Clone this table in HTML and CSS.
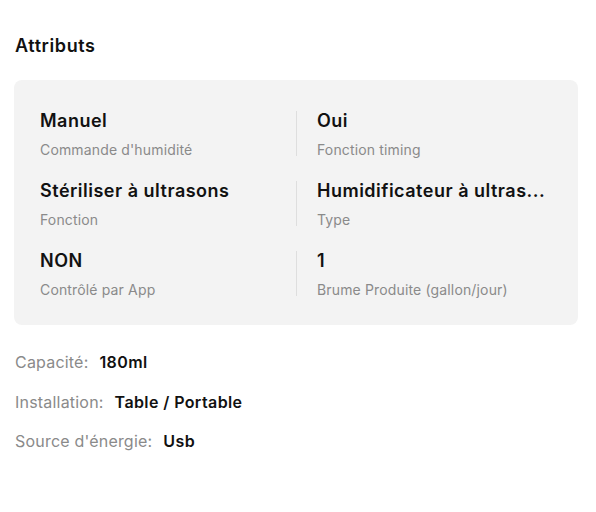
FILE: index.html
```html
<!doctype html>
<html lang="fr">
<head>
<meta charset="UTF-8">
<title>Attributs</title>
<link rel="stylesheet" href="styles.css">
</head>
<body>
	<div class="attrs">
		<h2 class="attrs-title">Attributs</h2>
		<div class="attrs-card">
			<div class="cell">
				<div class="cell-value">Manuel</div>
				<div class="cell-label">Commande d'humidité</div>
			</div>
			<div class="cell cell-right">
				<div class="cell-value">Oui</div>
				<div class="cell-label">Fonction timing</div>
			</div>
			<div class="cell">
				<div class="cell-value">Stériliser à ultrasons</div>
				<div class="cell-label">Fonction</div>
			</div>
			<div class="cell cell-right">
				<div class="cell-value" title="Humidificateur à ultrasons">Humidificateur à ultras...</div>
				<div class="cell-label">Type</div>
			</div>
			<div class="cell">
				<div class="cell-value">NON</div>
				<div class="cell-label">Contrôlé par App</div>
			</div>
			<div class="cell cell-right">
				<div class="cell-value">1</div>
				<div class="cell-label">Brume Produite (gallon/jour)</div>
			</div>
		</div>
		<ul class="attrs-list">
			<li><span class="key">Capacité:</span><span class="val">180ml</span></li>
			<li><span class="key">Installation:</span><span class="val">Table / Portable</span></li>
			<li><span class="key">Source d'énergie:</span><span class="val">Usb</span></li>
		</ul>
	</div>
</body>
</html>
```

FILE: styles.css
```css
* {margin:0;padding:0;box-sizing:border-box;}
body{font-family:Inter,"Noto Sans",sans-serif;color:#111;background:#fff;}
ul,li{list-style:none;}
.attrs{padding:34px 18px 0 14px;}
.attrs-title{font-size:18px;font-weight:600;line-height:24px;padding-left:1px;letter-spacing:0.6px;}
.attrs-card{margin-top:22px;background:#f3f3f3;border-radius:8px;padding:31px 26px 29px 26px;display:grid;grid-template-columns:1fr 1fr;row-gap:25px;}
.cell{min-width:0;height:45px;}
.cell-right{border-left:1px solid #dedede;padding-left:20px;}
.cell-value{font-size:18px;font-weight:600;line-height:20px;letter-spacing:0.5px;white-space:nowrap;}
.cell-label{margin-top:11px;font-size:14px;line-height:16px;color:#8a8a8a;letter-spacing:0.15px;}
.attrs-list{margin-top:27px;padding-left:1px;}
.attrs-list li{font-size:16px;line-height:20px;margin-bottom:19.5px;}
.attrs-list .key{color:#8a8a8a;margin-right:11px;letter-spacing:0.2px;}
.attrs-list .val{font-weight:600;color:#111;letter-spacing:0.4px;}
```
